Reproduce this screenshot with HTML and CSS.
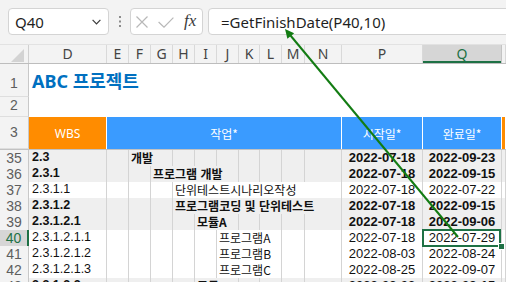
FILE: index.html
```html
<!DOCTYPE html>
<html lang="ko">
<head>
<meta charset="utf-8">
<title>ABC 프로젝트</title>
<link rel="stylesheet" href="styles.css">
</head>
<body>
<div class="app">
  <header class="fbar">
    <div class="namebox">
      <span>Q40</span>
      <svg class="chev" width="9" height="6" viewBox="0 0 9 6"><path d="M0.6 0.8L4.5 4.8L8.4 0.8" fill="none" stroke="#3a3a3a" stroke-width="1.2"/></svg>
    </div>
    <div class="grip">
      <svg width="2" height="11" viewBox="0 0 2 11"><rect x="0" y="0" width="2" height="2" fill="#8c8c8c"/><rect x="0" y="4.5" width="2" height="2" fill="#8c8c8c"/><rect x="0" y="9" width="2" height="2" fill="#8c8c8c"/></svg>
    </div>
    <div class="btns">
      <svg class="ic-x" width="12" height="12" viewBox="0 0 12 12"><path d="M0.5 0.5L11.5 11.5M11.5 0.5L0.5 11.5" stroke="#b8b8b8" stroke-width="1.2" fill="none"/></svg>
      <svg class="ic-ok" width="16" height="11" viewBox="0 0 16 11"><path d="M0.6 5L6 10.2L15.4 0.6" stroke="#b8b8b8" stroke-width="1.2" fill="none"/></svg>
      <span class="fx">fx</span>
    </div>
    <div class="formula">=GetFinishDate(P40,10)</div>
  </header>

  <div class="sheet">
    <div class="row colhdr">
      <div class="corner"><svg width="13" height="13" viewBox="0 0 13 13"><path d="M13 0V13H0Z" fill="#d3d3d3"/></svg></div>
      <div class="ch">D</div><div class="ch">E</div><div class="ch">F</div><div class="ch">G</div><div class="ch">H</div><div class="ch">I</div><div class="ch">J</div><div class="ch">K</div><div class="ch">L</div><div class="ch">M</div><div class="ch">N</div><div class="ch">P</div><div class="ch sel">Q</div><div class="ch"></div>
    </div>

    <div class="row r1">
      <div class="rh rh-bottom">1</div>
      <div class="title">ABC&nbsp;<span class="ko">프로젝트</span></div>
    </div>
    <div class="row r2">
      <div class="rh rh-top">2</div>
      <div class="blank"></div>
    </div>
    <div class="row r3">
      <div class="rh">3</div>
      <div class="hd org">WBS</div>
      <div class="hd blu s10"><span class="ko">작업*</span></div>
      <div class="hd blu"><span class="ko">시작일*</span></div>
      <div class="hd blu"><span class="ko">완료일*</span></div>
      <div class="hd org"></div>
    </div>

    <div class="row data g b">
      <div class="rh">35</div>
      <div class="c wbs">2.3</div>
      <div class="c"></div>
      <div class="c s2"><span class="ko">개발</span></div>
      <div class="c"></div><div class="c"></div><div class="c"></div><div class="c"></div><div class="c"></div><div class="c"></div><div class="c"></div>
      <div class="c d">2022-07-18</div><div class="c d">2022-09-23</div><div class="c"></div>
    </div>
    <div class="row data g b">
      <div class="rh">36</div>
      <div class="c wbs">2.3.1</div>
      <div class="c"></div><div class="c"></div>
      <div class="c s4"><span class="ko">프로그램 개발</span></div>
      <div class="c"></div><div class="c"></div><div class="c"></div><div class="c"></div>
      <div class="c d">2022-07-18</div><div class="c d">2022-09-15</div><div class="c"></div>
    </div>
    <div class="row data">
      <div class="rh">37</div>
      <div class="c wbs">2.3.1.1</div>
      <div class="c"></div><div class="c"></div><div class="c"></div>
      <div class="c s7"><span class="ko">단위테스트시나리오작성</span></div>
      <div class="c d">2022-07-18</div><div class="c d">2022-07-22</div><div class="c"></div>
    </div>
    <div class="row data g b">
      <div class="rh">38</div>
      <div class="c wbs">2.3.1.2</div>
      <div class="c"></div><div class="c"></div><div class="c"></div>
      <div class="c s7"><span class="ko">프로그램코딩 및 단위테스트</span></div>
      <div class="c d">2022-07-18</div><div class="c d">2022-09-15</div><div class="c"></div>
    </div>
    <div class="row data g b">
      <div class="rh">39</div>
      <div class="c wbs">2.3.1.2.1</div>
      <div class="c"></div><div class="c"></div><div class="c"></div><div class="c"></div>
      <div class="c s2"><span class="ko">모듈A</span></div>
      <div class="c"></div><div class="c"></div><div class="c"></div><div class="c"></div>
      <div class="c d">2022-07-18</div><div class="c d">2022-09-06</div><div class="c"></div>
    </div>
    <div class="row data">
      <div class="rh rh-sel">40</div>
      <div class="c wbs">2.3.1.2.1.1</div>
      <div class="c"></div><div class="c"></div><div class="c"></div><div class="c"></div><div class="c"></div>
      <div class="c s3"><span class="ko">프로그램A</span></div>
      <div class="c"></div><div class="c"></div>
      <div class="c d">2022-07-18</div><div class="c d active">2022-07-29</div><div class="c"></div>
    </div>
    <div class="row data">
      <div class="rh">41</div>
      <div class="c wbs">2.3.1.2.1.2</div>
      <div class="c"></div><div class="c"></div><div class="c"></div><div class="c"></div><div class="c"></div>
      <div class="c s3"><span class="ko">프로그램B</span></div>
      <div class="c"></div><div class="c"></div>
      <div class="c d">2022-08-03</div><div class="c d">2022-08-24</div><div class="c"></div>
    </div>
    <div class="row data">
      <div class="rh">42</div>
      <div class="c wbs">2.3.1.2.1.3</div>
      <div class="c"></div><div class="c"></div><div class="c"></div><div class="c"></div><div class="c"></div>
      <div class="c s3"><span class="ko">프로그램C</span></div>
      <div class="c"></div><div class="c"></div>
      <div class="c d">2022-08-25</div><div class="c d">2022-09-07</div><div class="c"></div>
    </div>
    <div class="row data g b">
      <div class="rh">43</div>
      <div class="c wbs">2.3.1.2.2</div>
      <div class="c"></div><div class="c"></div><div class="c"></div><div class="c"></div>
      <div class="c s2"><span class="ko">모듈B</span></div>
      <div class="c"></div><div class="c"></div><div class="c"></div><div class="c"></div>
      <div class="c d">2022-08-03</div><div class="c d">2022-09-15</div><div class="c"></div>
    </div>
  </div>

  <svg class="arrow" width="506" height="282" viewBox="0 0 506 282">
    <line x1="458" y1="237" x2="290.5" y2="35.5" stroke="#137c13" stroke-width="2"/>
    <polygon points="285,29 294.2,33.2 287.4,38.8" fill="#137c13"/>
  </svg>
</div>
</body>
</html>
```

FILE: styles.css
```css
html, body {
  margin: 0;
  padding: 0;
}
body {
  width: 506px;
  height: 282px;
  overflow: hidden;
  background: #ffffff;
  font-family: "Noto Sans", "Noto Sans CJK KR", sans-serif;
  color: #1a1a1a;
}
.app {
  position: relative;
  width: 506px;
  height: 282px;
  overflow: hidden;
}

/* ---------- formula bar ---------- */
.fbar {
  box-sizing: border-box;
  height: 44px;
  background: #f3f3f3;
  display: flex;
  align-items: flex-start;
  padding: 8px 0 0 8px;
}
.namebox, .btns, .formula {
  box-sizing: border-box;
  height: 27px;
  background: #ffffff;
  border: 1px solid #d4d4d4;
  border-radius: 4px;
  display: flex;
  align-items: center;
  flex: none;
}
.namebox {
  width: 101px;
  justify-content: space-between;
  padding: 0 7px 0 6px;
  font-size: 15px;
  color: #1f1f1f;
}
.grip {
  width: 21px;
  height: 27px;
  display: flex;
  align-items: center;
  justify-content: center;
  flex: none;
}
.btns {
  width: 73px;
  padding-left: 5px;
  gap: 10px;
}
.ic-ok {
  margin-top: 1px;
}
.fx {
  font-family: "Liberation Serif", serif;
  font-style: italic;
  font-size: 17px;
  color: #3a3a3a;
  line-height: 1;
  margin-top: -2px;
}
.formula {
  margin-left: 5px;
  width: 320px;
  padding-left: 12px;
  font-size: 15px;
  color: #1f1f1f;
}

/* ---------- sheet ---------- */
.sheet {
  height: 238px;
  overflow: hidden;
}
.row {
  display: grid;
  grid-template-columns: 29px 78px 22px 22px 22px 22px 22px 22px 21px 22px 23px 37px 81px 79px 1fr;
}
.colhdr {
  box-sizing: border-box;
  height: 20px;
  border-top: 1px solid #e2e2e2;
  border-bottom: 1px solid #bdbdbd;
  background: #f3f3f3;
}
.corner {
  display: flex;
  align-items: flex-end;
  justify-content: flex-end;
  padding: 0 4px 1px 0;
  border-right: 1px solid #d0d0d0;
}
.ch {
  box-sizing: border-box;
  border-right: 1px solid #d9d9d9;
  font-size: 14px;
  line-height: 18px;
  text-align: center;
  color: #444444;
}
.ch.sel {
  background: #d6d6d6;
  color: #1e7145;
  border-right-color: #c4c4c4;
  box-shadow: inset 0 -2px 0 #1e7145;
}

.rh {
  box-sizing: border-box;
  background: #f3f3f3;
  border-right: 1px solid #c8c8c8;
  border-bottom: 1px solid #dedede;
  font-family: "Liberation Sans", sans-serif;
  font-size: 14px;
  line-height: 15px;
  color: #5e5e5e;
  display: flex;
  align-items: center;
  justify-content: center;
  overflow: hidden;
}
.rh-bottom {
  align-items: flex-end;
  padding-bottom: 5px;
}
.rh-top {
  align-items: flex-start;
  padding-top: 1px;
}
.rh-sel {
  background: #d6d6d6;
  color: #1e7145;
  border-right: 2px solid #1e7145;
}

.r1 { height: 33px; }
.r2 { height: 20px; }
.title {
  grid-column: 2 / -1;
  padding: 5px 0 0 3px;
  font-size: 18px;
  font-weight: 700;
  line-height: 22px;
  color: #0070c0;
  white-space: nowrap;
}
.title .ko {
  font-family: "Noto Sans CJK KR", sans-serif;
  font-size: 18px;
}

.r3 {
  box-sizing: border-box;
  height: 33px;
  border-bottom: 1px solid #c2c2c2;
}
.hd {
  box-sizing: border-box;
  border-right: 1px solid #ffffff;
  color: #ffffff;
  font-size: 12px;
  display: flex;
  align-items: center;
  justify-content: center;
}
.hd .ko {
  font-family: "Noto Sans CJK KR", sans-serif;
  font-size: 12px;
}
.org { background: #ff8c00; }
.blu { background: #3a9bff; }
.s2 { grid-column: span 2; }
.s3 { grid-column: span 3; }
.s4 { grid-column: span 4; }
.s7 { grid-column: span 7; }
.s10 { grid-column: span 10; }

.data {
  height: 16px;
}
.c {
  box-sizing: border-box;
  border-right: 1px solid #d4d4d4;
  border-bottom: 1px solid #d4d4d4;
  padding-left: 2px;
  font-family: "Liberation Sans", "Noto Sans CJK KR", sans-serif;
  font-size: 13px;
  line-height: 15px;
  white-space: nowrap;
  color: #111111;
  background: #ffffff;
}
.c .ko {
  font-family: "Noto Sans CJK KR", sans-serif;
  font-size: 12px;
}
.c.wbs {
  padding-left: 3px;
  font-size: 12.5px;
}
.c.d {
  padding-left: 0;
  text-align: center;
}
.g .c {
  background: #efefef;
}
.b .c {
  font-weight: 700;
}
.c.active {
  position: relative;
}
.c.active::after {
  content: "";
  position: absolute;
  left: -1px;
  top: -1px;
  right: 0;
  bottom: -1px;
  border: 2px solid #1e7145;
}
.c.active::before {
  content: "";
  position: absolute;
  right: -3px;
  bottom: -3px;
  width: 5px;
  height: 5px;
  background: #1e7145;
  outline: 1px solid #ffffff;
  z-index: 2;
}

.arrow {
  position: absolute;
  left: 0;
  top: 0;
  pointer-events: none;
}
```
